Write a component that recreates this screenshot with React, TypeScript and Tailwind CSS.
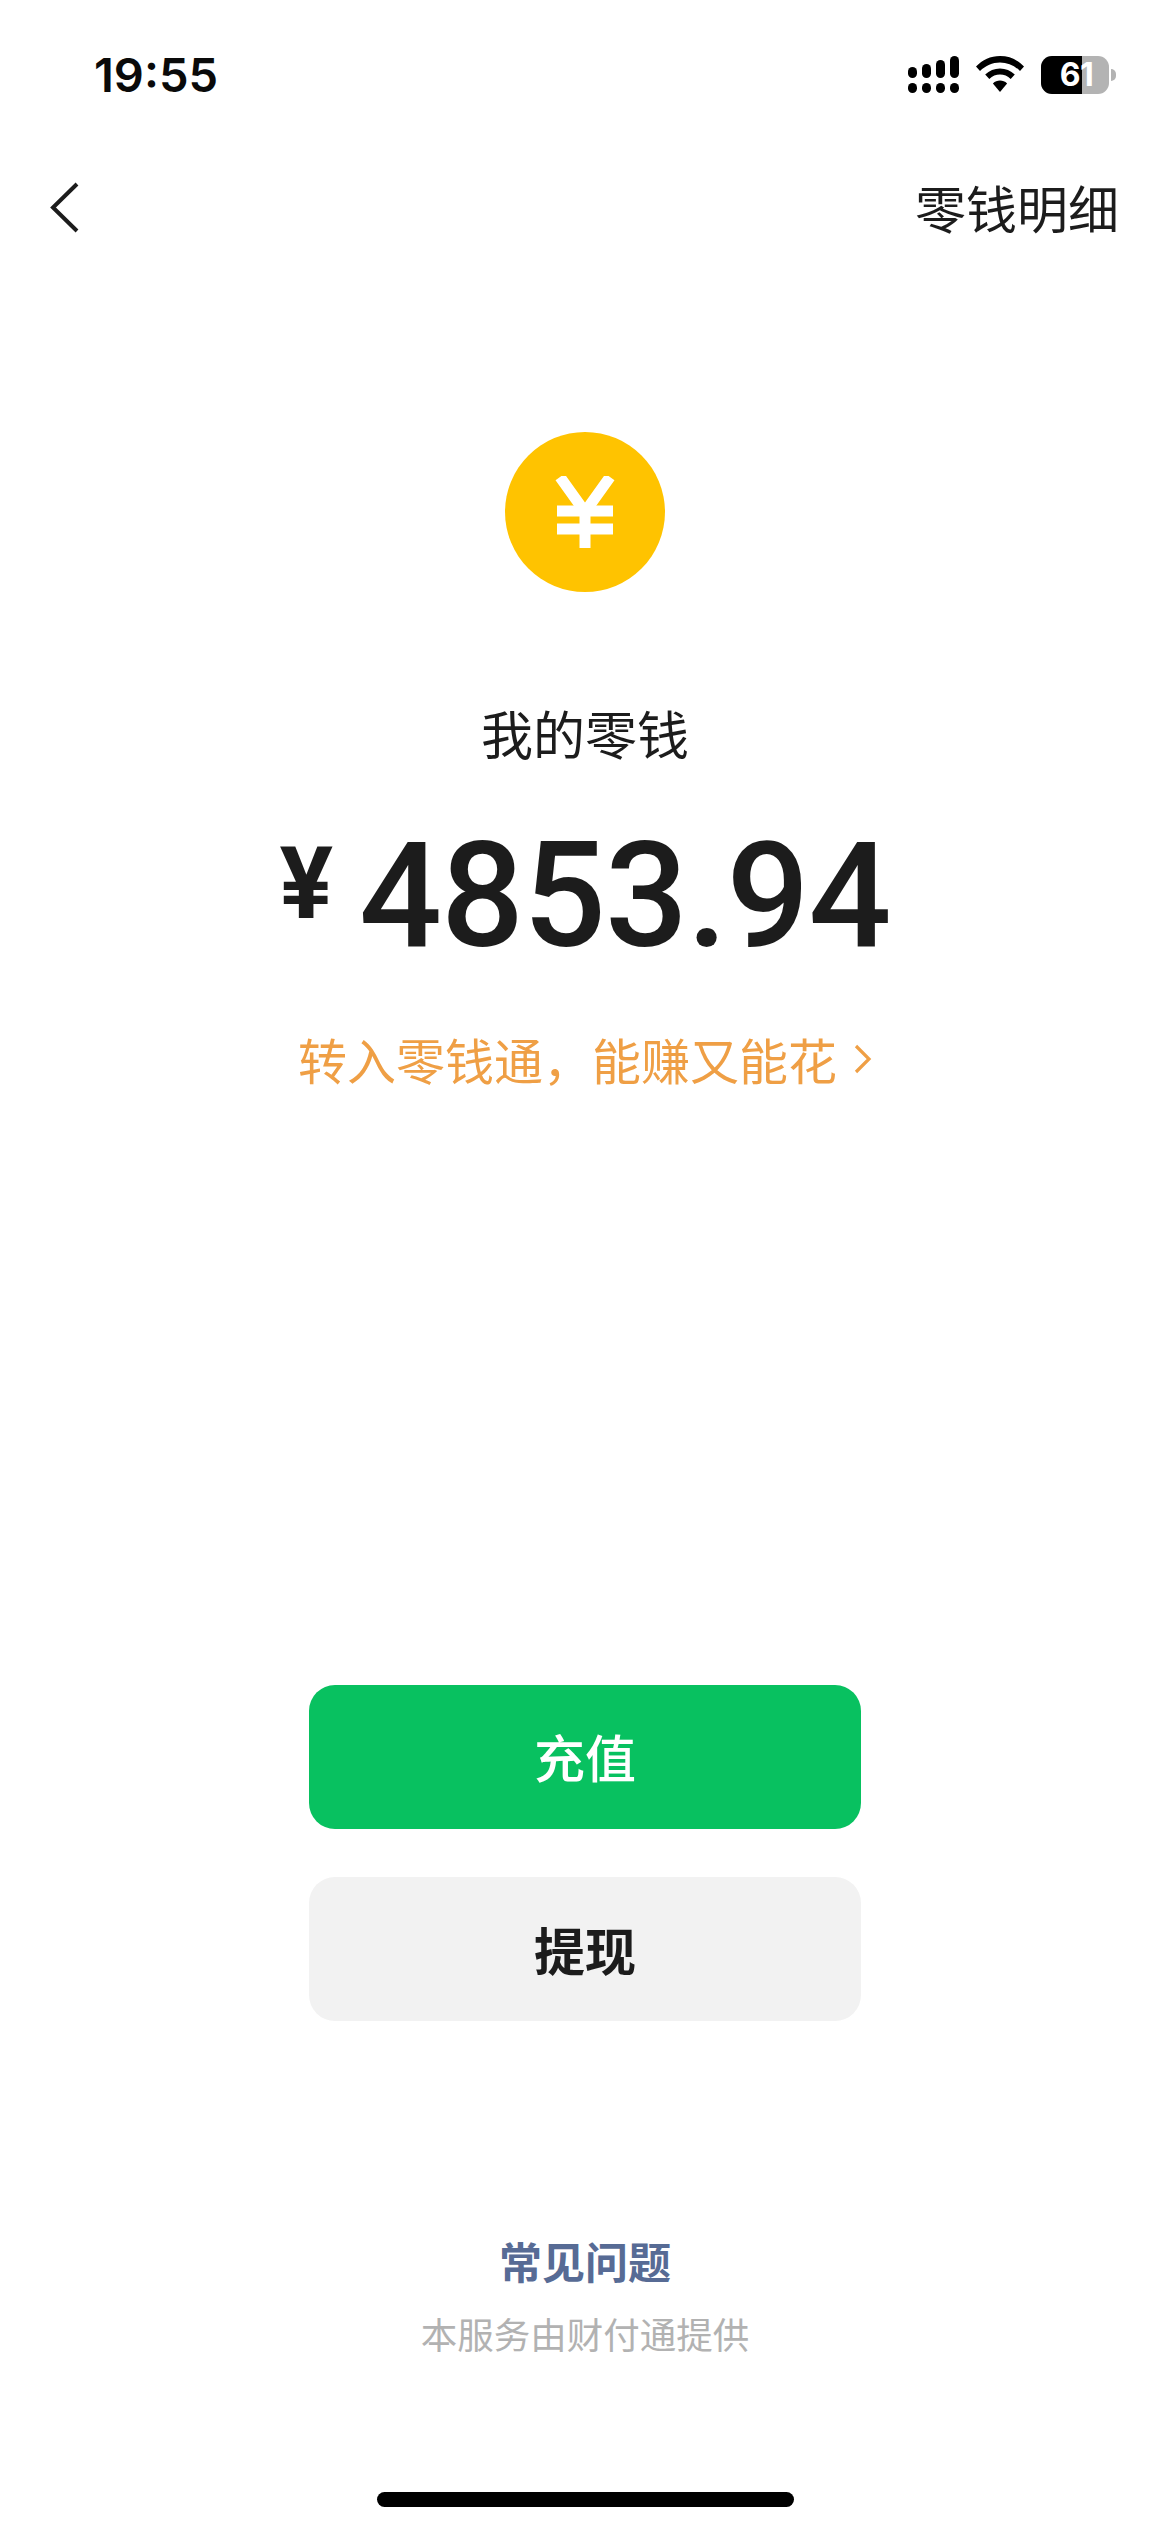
import React from "react";

const cjk = "font-['Noto_Sans_CJK_SC',sans-serif]";

function Signal() {
  const tops = [
    [0, 11, 11],
    [14, 8, 14],
    [28, 4, 18],
    [42, 0, 22],
  ];
  return (
    <svg width="51" height="37" viewBox="0 0 51 37" fill="#000">
      {tops.map(([x, y, h]) => (
        <g key={x}>
          <rect x={x} y={y} width="9" height={h} rx="4.5" />
          <rect x={x} y="27" width="9" height="10" rx="4.5" />
        </g>
      ))}
    </svg>
  );
}

function Wifi() {
  return (
    <svg width="48" height="36" viewBox="0 0 48 36" fill="#000">
      <path d="M24 0C33.5 0 41.5 3.6 48 10.6L44 15C38.4 9.4 31.6 6.4 24 6.4S9.6 9.4 4 15L0 10.6C6.5 3.6 14.5 0 24 0Z" />
      <path d="M24 12.4C29.7 12.4 34.6 14.5 38.8 18.6L34.7 23C31.6 20.1 28 18.6 24 18.6S16.4 20.1 13.3 23L9.2 18.6C13.4 14.5 18.3 12.4 24 12.4Z" />
      <path d="M24 24.6C26.7 24.6 29 25.5 31.1 27.4L24 36L16.9 27.4C19 25.5 21.3 24.6 24 24.6Z" />
    </svg>
  );
}

function Battery() {
  return (
    <div className="flex items-center">
      <div className="relative h-[38px] w-[68px] overflow-hidden rounded-[11px] bg-[#b3b3b3]">
        <div className="h-full w-[41px] bg-black" />
        <span className="absolute inset-0 flex items-center justify-center pl-[3px] font-['Inter',sans-serif] text-[32px] leading-none font-bold tracking-[-0.5px] text-white">
          61
        </span>
      </div>
      <div className="ml-[2px] h-[12px] w-[5px] rounded-r-full bg-[#b3b3b3]" />
    </div>
  );
}

export default function App() {
  return (
    <div className={`flex min-h-[2532px] w-[1170px] flex-col bg-white ${cjk}`}>
      <div className="flex h-[148px] items-start justify-between pt-[56px] pr-[54px] pl-[94px]">
        <span className="font-['Inter',sans-serif] text-[47px] leading-[38px] font-semibold text-[#0a0a0a]">
          19:55
        </span>
        <div className="flex items-start gap-[17px]">
          <Signal />
          <Wifi />
          <Battery />
        </div>
      </div>

      <div className="flex h-[118px] items-center justify-between pr-[51px] pl-[49px]">
        <svg width="30" height="52" viewBox="0 0 30 52" fill="none" stroke="#1c1c1c" strokeWidth="4">
          <path d="M28 3L4 26.5L28 50" />
        </svg>
        <span className="text-[51px] leading-[72px] text-[#1c1c1c]">零钱明细</span>
      </div>

      <div className="mt-[166px] flex flex-col items-center">
        <div className="flex h-[160px] w-[160px] items-center justify-center rounded-full bg-[#ffc300]">
          <svg width="60" height="72" viewBox="0 0 60 72" fill="none" stroke="#fff" strokeWidth="11">
            <path d="M5 1L30 36L55 1" />
            <path d="M2 35H58M2 53H58M30 34V72" />
          </svg>
        </div>

        <div className="mt-[105px] flex h-[72px] items-center text-[52px] text-[#1c1c1c]">我的零钱</div>

        <div className="mt-[48px] flex h-[160px] items-center font-['Roboto',sans-serif] font-medium text-[#1c1c1c]">
          <span className="mr-[26px] mb-[26px] text-[100px] leading-none font-bold">¥</span>
          <span className="text-[146px] leading-none tracking-[-1px]">4853.94</span>
        </div>

        <div className="mt-[48px] flex h-[68px] items-center text-[49px] text-[#ef9f45]">
          <span>{"转入零钱通\uFF0C能赚又能花"}</span>
          <svg className="ml-[17px]" width="18" height="30" viewBox="0 0 18 30" fill="none" stroke="#ef9f45" strokeWidth="3.2">
            <path d="M2 2L15 15L2 28" />
          </svg>
        </div>

        <div className="mt-[592px] flex h-[144px] w-[552px] items-center justify-center rounded-[26px] bg-[#08c160] pb-[2px] text-[51px] font-medium text-white">
          充值
        </div>
        <div className="mt-[48px] flex h-[144px] w-[552px] items-center justify-center rounded-[26px] bg-[#f2f2f2] text-[51px] font-semibold text-[#1c1c1c]">
          提现
        </div>

        <div className="mt-[209px] flex h-[60px] items-center text-[43px] font-semibold text-[#576b95]">常见问题</div>
        <div className="mt-[19px] flex h-[50px] items-center text-[36.5px] text-[#b2b2b2]">本服务由财付通提供</div>

        <div className="mt-[133px] h-[15px] w-[417px] rounded-full bg-black" />
      </div>
    </div>
  );
}
